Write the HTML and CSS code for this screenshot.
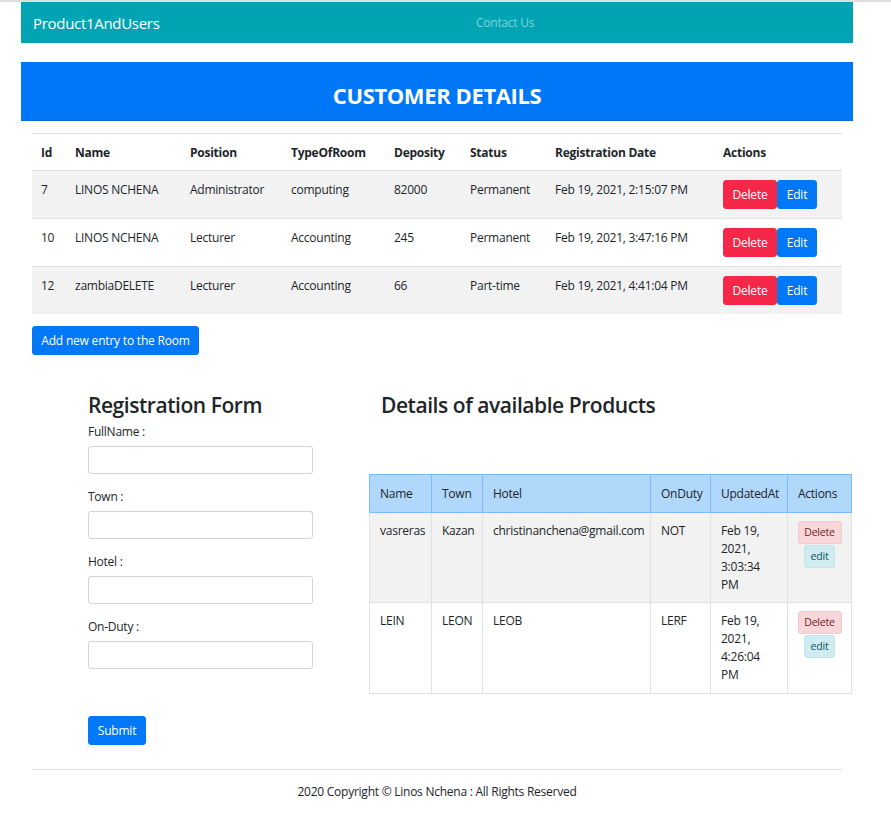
FILE: index.html
```html
<!DOCTYPE html>
<html lang="en">
<head>
<meta charset="utf-8">
<title>Product1AndUsers</title>
<link rel="stylesheet" href="styles.css">
</head>
<body>
<div class="page">
  <nav class="navbar">
    <a class="brand" href="#">Product1AndUsers</a>
    <a class="nav-link" href="#">Contact Us</a>
  </nav>

  <header class="banner">
    <h1>CUSTOMER DETAILS</h1>
  </header>

  <section class="customers">
    <table class="table striped">
      <colgroup>
        <col class="c-id"><col class="c-name"><col class="c-pos"><col class="c-type">
        <col class="c-dep"><col class="c-status"><col class="c-date"><col class="c-act">
      </colgroup>
      <thead>
        <tr><th>Id</th><th>Name</th><th>Position</th><th>TypeOfRoom</th><th>Deposity</th><th>Status</th><th>Registration Date</th><th>Actions</th></tr>
      </thead>
      <tbody>
        <tr><td>7</td><td>LINOS NCHENA</td><td>Administrator</td><td>computing</td><td>82000</td><td>Permanent</td><td>Feb 19, 2021, 2:15:07 PM</td><td><div class="btn-pair"><button class="btn btn-danger">Delete</button><button class="btn btn-primary">Edit</button></div></td></tr>
        <tr><td>10</td><td>LINOS NCHENA</td><td>Lecturer</td><td>Accounting</td><td>245</td><td>Permanent</td><td>Feb 19, 2021, 3:47:16 PM</td><td><div class="btn-pair"><button class="btn btn-danger">Delete</button><button class="btn btn-primary">Edit</button></div></td></tr>
        <tr><td>12</td><td>zambiaDELETE</td><td>Lecturer</td><td>Accounting</td><td>66</td><td>Part-time</td><td>Feb 19, 2021, 4:41:04 PM</td><td><div class="btn-pair"><button class="btn btn-danger">Delete</button><button class="btn btn-primary">Edit</button></div></td></tr>
      </tbody>
    </table>
    <button class="btn btn-primary add-btn">Add new entry to the Room</button>
  </section>

  <section class="lower">
    <div class="form-col">
      <h3>Registration Form</h3>
      <form class="reg-form">
        <div class="group"><label>FullName :</label><input type="text"></div>
        <div class="group"><label>Town :</label><input type="text"></div>
        <div class="group"><label>Hotel :</label><input type="text"></div>
        <div class="group"><label>On-Duty :</label><input type="text"></div>
        <button type="button" class="btn btn-primary submit">Submit</button>
      </form>
    </div>
    <div class="products-col">
      <h3>Details of available Products</h3>
      <table class="table bordered products">
        <colgroup>
          <col class="p-name"><col class="p-town"><col class="p-hotel"><col class="p-duty"><col class="p-upd"><col class="p-act">
        </colgroup>
        <thead>
          <tr><th>Name</th><th>Town</th><th>Hotel</th><th>OnDuty</th><th>UpdatedAt</th><th>Actions</th></tr>
        </thead>
        <tbody>
          <tr class="shade"><td>vasreras</td><td>Kazan</td><td>christinanchena@gmail.com</td><td>NOT</td><td>Feb 19, 2021, 3:03:34 PM</td><td><div class="btn-stack"><button class="btn-sm light-danger">Delete</button><button class="btn-sm light-info">edit</button></div></td></tr>
          <tr><td>LEIN</td><td>LEON</td><td>LEOB</td><td>LERF</td><td>Feb 19, 2021, 4:26:04 PM</td><td><div class="btn-stack"><button class="btn-sm light-danger">Delete</button><button class="btn-sm light-info">edit</button></div></td></tr>
        </tbody>
      </table>
    </div>
  </section>

  <footer class="footer">
    <p>2020 Copyright © Linos Nchena : All Rights Reserved</p>
  </footer>
</div>
</body>
</html>
```

FILE: styles.css
```css
* { box-sizing: border-box; }

html, body {
  margin: 0;
  padding: 0;
  background: #fff;
}

body {
  font-family: "Open Sans", "Noto Sans", sans-serif;
  font-size: 12px;
  line-height: 18px;
  letter-spacing: -0.25px;
  color: #212529;
  border-top: 2px solid #dedede;
}

.page {
  width: 891px;
}

/* navbar */
.navbar {
  margin: 0 38px 0 21px;
  height: 41px;
  background: #02a4b4;
  display: grid;
  grid-template-columns: 443px auto;
  align-items: center;
  padding-left: 12px;
  padding-top: 1px;
}
.brand {
  color: #fff;
  font-size: 15px;
  text-decoration: none;
  letter-spacing: -0.3px;
}
.nav-link {
  color: #80d1da;
  font-size: 12px;
  text-decoration: none;
}

/* banner */
.banner {
  margin: 19px 38px 0 21px;
  height: 59px;
  background: #0077f7;
  border-bottom: 1px solid #0a6cd8;
  display: flex;
  justify-content: center;
  align-items: center;
  padding-top: 8px;
}
.banner h1 {
  margin: 0;
  color: #fff;
  font-size: 22px;
  font-weight: 700;
  line-height: 26px;
  letter-spacing: -0.4px;
}

/* tables */
.customers {
  margin: 12px 49px 0 32px;
}
.table {
  width: 100%;
  border-collapse: collapse;
  table-layout: fixed;
}
.table th, .table td {
  padding: 9px 9px;
  text-align: left;
  vertical-align: top;
  border-top: 1px solid #dee2e6;
  white-space: nowrap;
}
.striped th { font-weight: 700; padding-top: 10px; padding-bottom: 8px; }
.striped td { padding-top: 10px; padding-bottom: 8px; }
.striped tbody tr:nth-child(odd) { background: #f2f2f2; }

.c-id { width: 34px; }
.c-name { width: 115px; }
.c-pos { width: 101px; }
.c-type { width: 103px; }
.c-dep { width: 76px; }
.c-status { width: 85px; }
.c-date { width: 168px; }
.c-act { width: 128px; }

.striped td:last-child { padding-top: 9px; padding-bottom: 9px; }

.btn-pair { display: flex; }

.btn {
  font-family: inherit;
  font-size: 12px;
  line-height: 18px;
  letter-spacing: -0.2px;
  height: 29px;
  padding: 0;
  border: 1px solid transparent;
  border-radius: 3px;
  color: #fff;
  cursor: pointer;
}
.btn-danger { background: #f5284a; border-color: #f5284a; }
.btn-primary { background: #0078f8; border-color: #0078f8; }
.btn-pair .btn-danger { width: 54px; }
.btn-pair .btn-primary { width: 40px; }

.add-btn {
  display: block;
  margin-top: 12px;
  width: 167px;
}

/* lower section */
.lower {
  display: flex;
  margin-top: 37px;
}
.form-col {
  width: 369px;
  padding-left: 88px;
}
.lower h3 {
  margin: 0;
  font-size: 21px;
  line-height: 26px;
  font-weight: 600;
  letter-spacing: -0.45px;
}
.form-col h3 { margin-bottom: 5px; }

.group { margin-bottom: 14px; }
.group label {
  display: block;
  line-height: 18px;
  margin-bottom: 5px;
}
.group input {
  display: block;
  width: 225px;
  height: 28px;
  border: 1px solid #ced4da;
  border-radius: 3px;
  font: inherit;
}
.submit {
  margin-top: 33px;
  width: 58px;
}

.products-col {
  width: 482px;
}
.products-col h3 {
  padding-left: 12px;
  margin-bottom: 56px;
}
.products {
  border: 1px solid #dee2e6;
}
.products th, .products td {
  border: 1px solid #dee2e6;
  padding: 9px 10px 8px;
  white-space: normal;
}
.products thead th {
  background: #b0d8fb;
  border-color: #7abaff;
  font-weight: 400;
  padding-top: 10px;
  padding-bottom: 9px;
}
.products tbody tr:last-child td { padding-bottom: 9px; }
.products tr.shade { background: #f2f2f2; }

.p-name { width: 62px; }
.p-town { width: 51px; }
.p-hotel { width: 168px; }
.p-duty { width: 60px; }
.p-upd { width: 77px; }
.p-act { width: 64px; }

.products td:last-child { padding: 8px 0; }

.btn-stack {
  display: flex;
  flex-direction: column;
  align-items: center;
  gap: 1px;
}
.btn-sm {
  font-family: inherit;
  font-size: 10.5px;
  line-height: 15px;
  letter-spacing: -0.2px;
  padding: 3px 0;
  border: 1px solid;
  border-radius: 3px;
}
.light-danger {
  width: 44px;
  background: #f8d7da;
  border-color: #f5c6cb;
  color: #721c24;
}
.light-info {
  width: 31px;
  background: #d1ecf1;
  border-color: #bee5eb;
  color: #0c5460;
}

/* footer */
.footer {
  margin: 24px 49px 0 32px;
  border-top: 1px solid #e5e5e5;
  text-align: center;
  padding-top: 13px;
}
.footer p { margin: 0; }
```
